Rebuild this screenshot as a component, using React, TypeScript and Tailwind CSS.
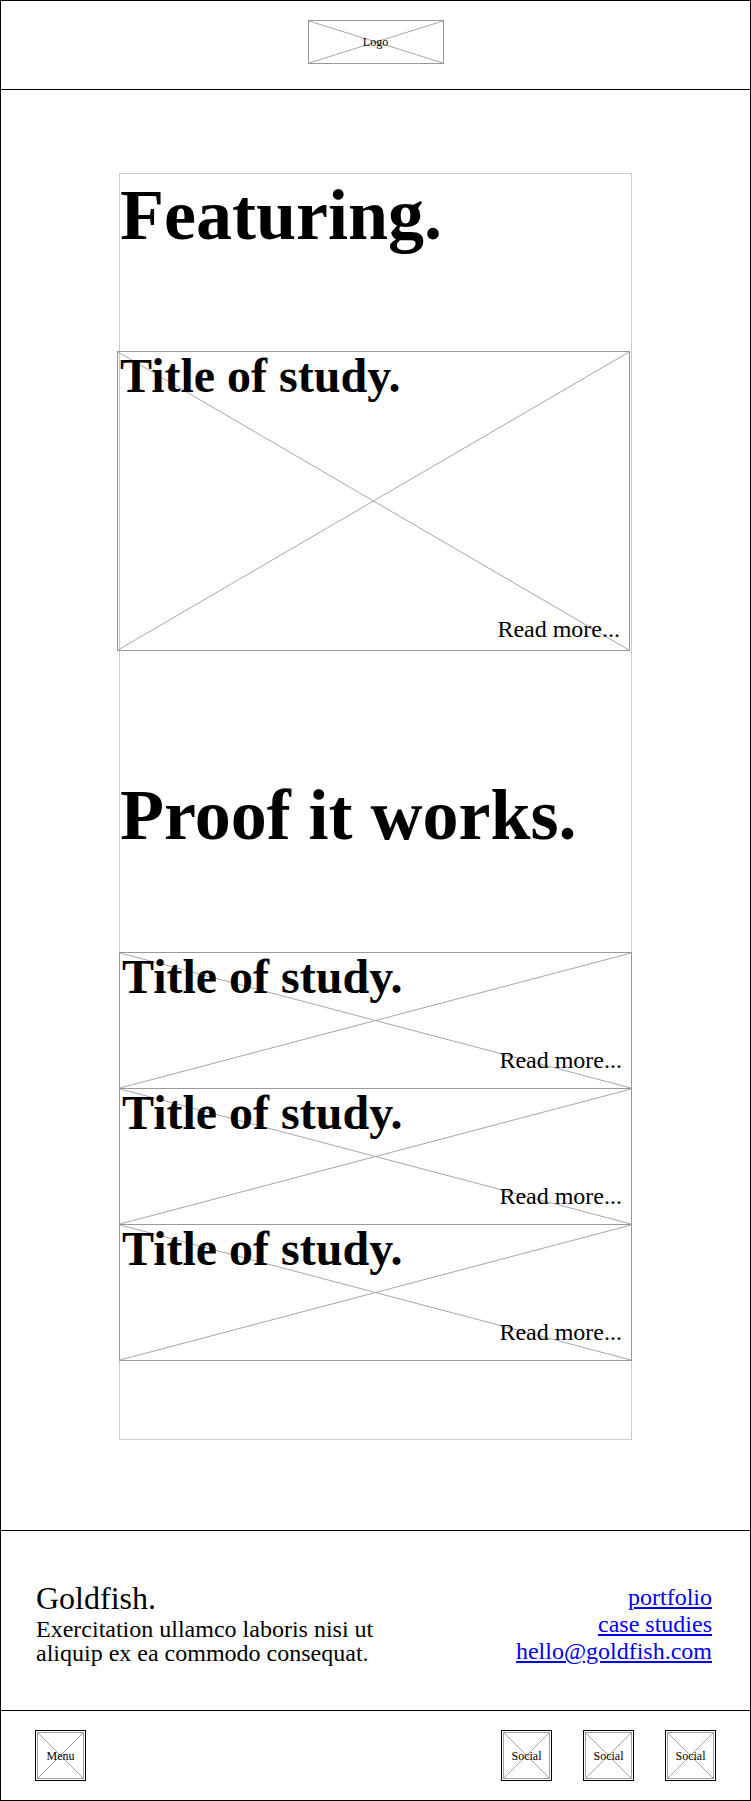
import React from "react";

function Cross({ color = "#a6a6a6" }: { color?: string }) {
  return (
    <svg
      className="pointer-events-none absolute inset-0 h-full w-full"
      viewBox="0 0 100 100"
      preserveAspectRatio="none"
      aria-hidden="true"
    >
      <line x1="0" y1="0" x2="100" y2="100" stroke={color} strokeWidth="1" vectorEffect="non-scaling-stroke" />
      <line x1="100" y1="0" x2="0" y2="100" stroke={color} strokeWidth="1" vectorEffect="non-scaling-stroke" />
    </svg>
  );
}

function IconBox({ label }: { label: string }) {
  return (
    <div className="flex h-[51px] w-[51px] border border-black p-px">
      <div className="relative flex flex-1 items-center justify-center border border-[#a0a0a0]">
        <Cross />
        <span className="relative text-[12px] leading-none">{label}</span>
      </div>
    </div>
  );
}

function StudyCard({ featured }: { featured?: boolean }) {
  return (
    <div
      className={
        featured
          ? "relative -ml-[3px] flex h-[300px] w-[513px] flex-col justify-between border border-[#999] px-[2px] pb-[7px]"
          : "relative -mt-px flex h-[137px] w-[513px] flex-col justify-between border border-[#999] px-[2px] pb-[14px] first:mt-0"
      }
    >
      <Cross />
      <h3 className="relative text-[48px] font-bold leading-none">Title of study.</h3>
      <span className="relative self-end pr-[7px] text-[24px] leading-[27px]">Read more...</span>
    </div>
  );
}

export default function App() {
  return (
    <div className="flex min-h-[1801px] w-[751px] flex-col border border-black bg-white font-['Liberation_Serif','Times_New_Roman',serif] text-black">
      <header className="flex h-[89px] justify-center border-b border-black pt-[19px]">
        <div className="relative flex h-[44px] w-[136px] items-center justify-center border border-[#999]">
          <Cross />
          <span className="relative text-[12px] leading-none">Logo</span>
        </div>
      </header>

      <main className="pt-[83px] pb-[90px]">
        <div className="mx-auto w-[513px] border border-[#cccccc] pb-[78px]">
          <h1 className="text-[72px] font-bold leading-[83px]">Featuring.</h1>
          <div className="mt-[94px]">
            <StudyCard featured />
          </div>
          <h2 className="mt-[123px] text-[72px] font-bold leading-[83px]">Proof it works.</h2>
          <div className="-mx-px mt-[95px] flex flex-col">
            <StudyCard />
            <StudyCard />
            <StudyCard />
          </div>
        </div>
      </main>

      <footer className="flex items-end justify-between border-y border-black pt-[49px] pb-[45px] pl-[35px] pr-[38px]">
        <div>
          <div className="text-[32px] leading-[37px]">Goldfish.</div>
          <p className="text-[24px] leading-[24px]">
            Exercitation ullamco laboris nisi ut
            <br />
            aliquip ex ea commodo consequat.
          </p>
        </div>
        <nav className="flex flex-col items-end text-[24px] leading-[27px]">
          <a href="#" className="text-[#0000ee] underline">portfolio</a>
          <a href="#" className="text-[#0000ee] underline">case studies</a>
          <a href="#" className="text-[#0000ee] underline">hello@goldfish.com</a>
        </nav>
      </footer>

      <div className="flex flex-1 items-start justify-between px-[34px] pt-[19px]">
        <IconBox label="Menu" />
        <div className="flex gap-[31px]">
          <IconBox label="Social" />
          <IconBox label="Social" />
          <IconBox label="Social" />
        </div>
      </div>
    </div>
  );
}
